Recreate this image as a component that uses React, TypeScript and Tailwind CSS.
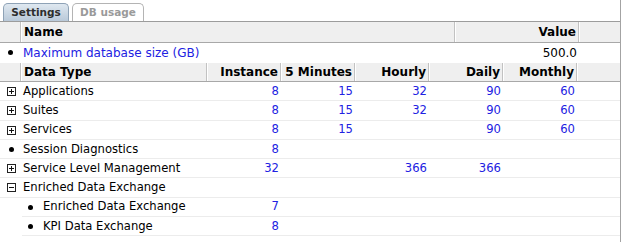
import React from "react";

type Row = {
  label: string;
  kind: "plus" | "minus" | "dot";
  child?: boolean;
  values: string[];
};

const ROWS: Row[] = [
  { label: "Applications", kind: "plus", values: ["8", "15", "32", "90", "60"] },
  { label: "Suites", kind: "plus", values: ["8", "15", "32", "90", "60"] },
  { label: "Services", kind: "plus", values: ["8", "15", "", "90", "60"] },
  { label: "Session Diagnostics", kind: "dot", values: ["8", "", "", "", ""] },
  { label: "Service Level Management", kind: "plus", values: ["32", "", "366", "366", ""] },
  { label: "Enriched Data Exchange", kind: "minus", values: ["", "", "", "", ""] },
  { label: "Enriched Data Exchange", kind: "dot", child: true, values: ["7", "", "", "", ""] },
  { label: "KPI Data Exchange", kind: "dot", child: true, values: ["8", "", "", "", ""] },
];

const COLUMNS = ["Instance", "5 Minutes", "Hourly", "Daily", "Monthly"];

function ToggleBox({ open }: { open: boolean }) {
  return (
    <svg width="9" height="9" viewBox="0 0 9 9" className="block">
      <rect x="0.5" y="0.5" width="8" height="8" fill="white" stroke="#222" />
      <line x1="2" y1="4.5" x2="7" y2="4.5" stroke="#111" />
      {!open && <line x1="4.5" y1="2" x2="4.5" y2="7" stroke="#111" />}
    </svg>
  );
}

function Dot() {
  return <span className="block h-[5px] w-[5px] rounded-full bg-black" />;
}

const headCell =
  "flex items-center border-r border-r-[#c2c2c2] border-l border-l-white px-[2px] font-bold text-black";

export default function App() {
  return (
    <div
      className="h-[242px] w-[622px] bg-white text-[12px] leading-none text-black"
      style={{ fontFamily: '"DejaVu Sans", Verdana, sans-serif' }}
    >
      <div className="h-full w-[621px] border-r border-[#a3a3a3]">
        {/* tabs */}
        <div className="flex h-[22px] items-end gap-[3px] border-b border-[#9c9c9c] pl-[3px]">
          <div className="flex h-[18px] w-[66px] items-center justify-center rounded-t-[5px] border border-b-0 border-[#8ea2b6] bg-gradient-to-b from-[#dfe8f0] to-[#b9c9d9] text-[10.5px] font-bold text-[#2d2d2d]">
            Settings
          </div>
          <div className="flex h-[18px] w-[72px] items-center justify-center rounded-t-[5px] border border-b-0 border-[#b4b4b4] bg-white text-[10.5px] font-bold text-[#9a9a9a]">
            DB usage
          </div>
        </div>

        {/* database size table */}
        <div className="grid h-[21px] grid-cols-[21px_434px_124px_1fr] border-b border-[#a8a8a8] bg-[#efefef]">
          <div className="border-r border-r-[#c2c2c2]" />
          <div className={headCell}>Name</div>
          <div className={headCell + " justify-end"}>Value</div>
          <div className="border-l border-l-white" />
        </div>
        <div className="grid h-[19px] grid-cols-[21px_434px_124px_1fr] items-center">
          <div className="flex justify-center">
            <Dot />
          </div>
          <div className="px-[2px] text-[#2121e2]">Maximum database size (GB)</div>
          <div className="px-[2px] text-right">500.0</div>
          <div />
        </div>

        {/* data type table */}
        <div className="grid h-[20px] grid-cols-[21px_186px_74px_74px_74px_74px_74px_1fr] border-b border-[#a8a8a8] border-t border-t-white bg-[#efefef]">
          <div className="border-r border-r-[#c2c2c2]" />
          <div className={headCell}>Data Type</div>
          {COLUMNS.map((c) => (
            <div key={c} className={headCell + " justify-end"}>
              {c}
            </div>
          ))}
          <div className="border-l border-l-white" />
        </div>
        {ROWS.map((r, i) => (
          <div
            key={i}
            className="relative grid h-[19.25px] grid-cols-[21px_186px_74px_74px_74px_74px_74px_1fr] items-center"
          >
            <div className="flex justify-center pl-[1px]">
              {!r.child && (r.kind === "dot" ? <Dot /> : <ToggleBox open={r.kind === "minus"} />)}
            </div>
            <div
              className={
                "flex items-center whitespace-nowrap px-[2px] text-[11.6px] " + (r.child ? "gap-[10px] pl-[7px]" : "")
              }
            >
              {r.child && <Dot />}
              {r.label}
            </div>
            {r.values.map((v, j) => (
              <div key={j} className="px-[2px] text-right text-[11.6px] text-[#2121e2]">
                {v}
              </div>
            ))}
            <div />
            <div
              className={
                "absolute bottom-0 right-0 h-px bg-[#ececec] " + (r.child ? "left-[22px]" : "left-0")
              }
            />
          </div>
        ))}
      </div>
    </div>
  );
}
